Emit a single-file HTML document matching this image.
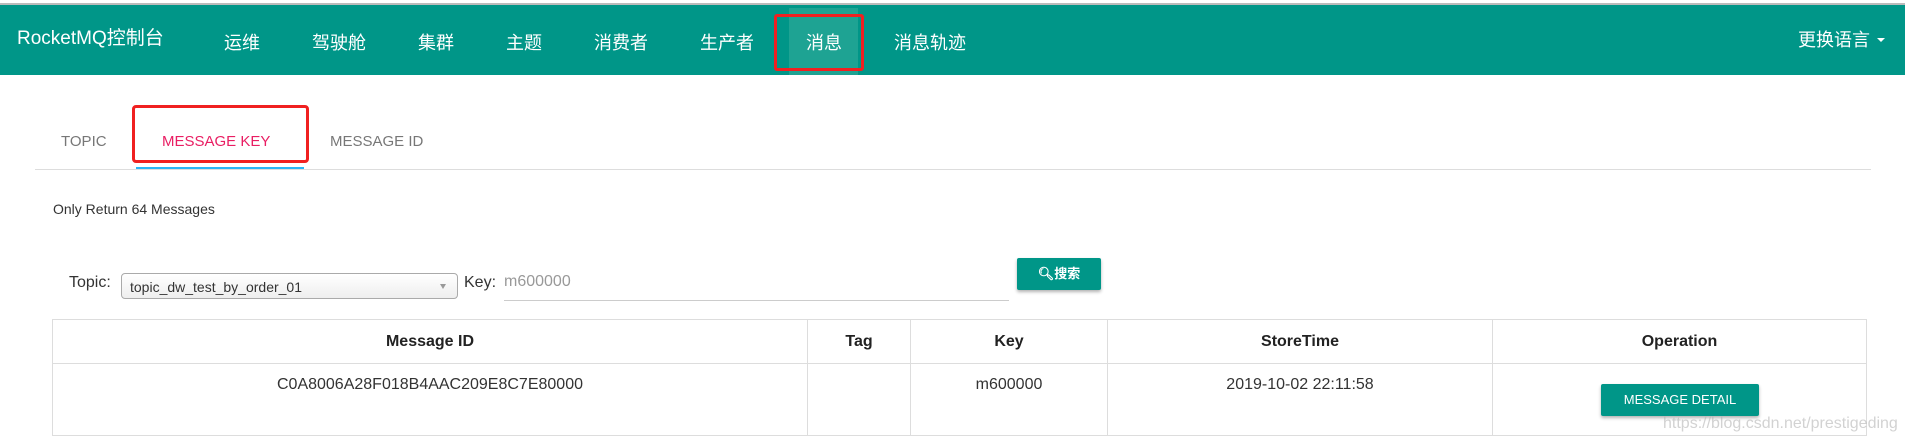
<!DOCTYPE html>
<html><head><meta charset="utf-8"><style>
*{margin:0;padding:0;box-sizing:border-box}
body{width:1905px;height:443px;background:#fff;position:relative;overflow:hidden;font-family:"Liberation Sans","Noto Sans CJK SC",sans-serif;color:#333}
.a{position:absolute;white-space:nowrap}
.nav{position:absolute;left:0;top:5px;width:1905px;height:70px;background:#009688}
.nv{position:absolute;top:28px;color:#fff;font-size:18px;line-height:20px}
.tab{position:absolute;top:133px;font-size:15px;color:#777;line-height:18px}
table{position:absolute;left:52px;top:319px;width:1815px;height:117px;border-collapse:collapse;font-size:16px}
td,th{border:1px solid #ddd;text-align:center}
th{height:44px;font-weight:bold;color:#222}
td{vertical-align:top;padding-top:12px;color:#333}
</style></head><body>
<div class="a" style="left:0;top:3px;width:1905px;height:2px;background:#bbb"></div>
<div class="nav">
<div class="nv" style="left:17px;top:24px;font-size:19px">RocketMQ控制台</div>
<div class="nv" style="left:224px">运维</div>
<div class="nv" style="left:312px">驾驶舱</div>
<div class="nv" style="left:418px">集群</div>
<div class="nv" style="left:506px">主题</div>
<div class="nv" style="left:594px">消费者</div>
<div class="nv" style="left:700px">生产者</div>
<div class="a" style="left:789px;top:3px;width:69px;height:67px;background:#1ea393"></div>
<div class="nv" style="left:806px">消息</div>
<div class="nv" style="left:894px">消息轨迹</div>
<div class="nv" style="left:1798px;top:25px">更换语言</div>
<div class="a" style="left:1877px;top:33px;border-left:4px solid transparent;border-right:4px solid transparent;border-top:4px solid #fff"></div>
</div>
<div class="a" style="left:774px;top:14px;width:90px;height:57px;border:3px solid #f02020;border-radius:3px"></div>
<div class="tab" style="left:61px">TOPIC</div>
<div class="tab" style="left:162px;color:#e91e63">MESSAGE KEY</div>
<div class="tab" style="left:330px">MESSAGE ID</div>
<div class="a" style="left:35px;top:169px;width:1836px;height:1px;background:#ddd"></div>
<div class="a" style="left:136px;top:167px;width:168px;height:2px;background:#29b6f6"></div>
<div class="a" style="left:132px;top:105px;width:177px;height:58px;border:3px solid #f02020;border-radius:4px"></div>
<div class="a" style="left:53px;top:201px;font-size:14px">Only Return 64 Messages</div>
<div class="a" style="left:69px;top:274px;font-size:16px">Topic:</div>
<div class="a" style="left:121px;top:273px;width:337px;height:26px;border:1px solid #aaa;border-radius:4px;background:linear-gradient(#fff,#eee);font-size:14px;padding:5px 8px">topic_dw_test_by_order_01</div>
<div class="a" style="left:440px;top:284px;border-left:3px solid transparent;border-right:3px solid transparent;border-top:5px solid #999"></div>
<div class="a" style="left:464px;top:274px;font-size:16px">Key:</div>
<div class="a" style="left:504px;top:273px;font-size:16px;color:#999">m600000</div>
<div class="a" style="left:504px;top:300px;width:505px;height:1px;background:#ccc"></div>
<div class="a" style="left:1017px;top:258px;width:84px;height:32px;background:#009688;border-radius:2px;box-shadow:0 2px 3px rgba(0,0,0,.3);color:#fff;font-size:13px;font-weight:bold;text-align:center;line-height:32px">&#x1F50D;&#xFE0E;搜索</div>
<table><tr><th style="width:755px">Message ID</th><th style="width:103px">Tag</th><th style="width:197px">Key</th><th style="width:385px">StoreTime</th><th>Operation</th></tr>
<tr><td>C0A8006A28F018B4AAC209E8C7E80000</td><td></td><td>m600000</td><td>2019-10-02 22:11:58</td><td></td></tr></table>
<div class="a" style="left:1601px;top:384px;width:158px;height:32px;background:#009688;border-radius:2px;box-shadow:0 2px 3px rgba(0,0,0,.3);color:#fff;font-size:13px;text-align:center;line-height:32px">MESSAGE DETAIL</div>
<div class="a" style="left:1663px;top:415px;font-size:16px;color:rgba(180,180,180,.6)">https://blog.csdn.net/prestigeding</div>
</body></html>
